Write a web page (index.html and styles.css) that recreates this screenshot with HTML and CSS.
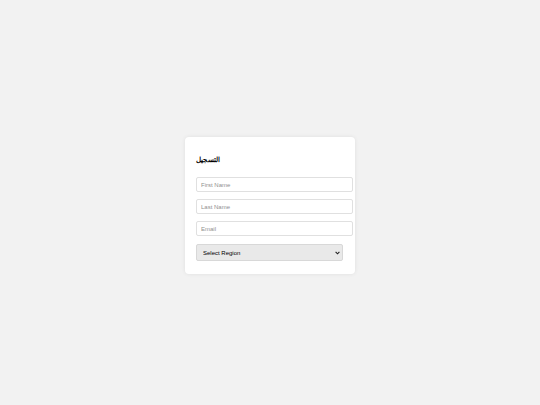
FILE: index.html
```html
<!DOCTYPE html>
<html lang="ar">
<head>
<meta charset="utf-8">
<title>التسجيل</title>
<link rel="stylesheet" href="styles.css">
</head>
<body>
<main class="page">
  <form class="card">
    <h2 class="title">التسجيل</h2>
    <input class="field" type="text" placeholder="First Name">
    <input class="field" type="text" placeholder="Last Name">
    <input class="field" type="email" placeholder="Email">
    <select class="region">
      <option>Select Region</option>
    </select>
  </form>
</main>
</body>
</html>
```
FILE: styles.css
```css
html, body {
  margin: 0;
  padding: 0;
  background: #f2f2f2;
  font-family: "Liberation Sans", Arial, sans-serif;
}
.page {
  height: 405px;
  display: flex;
  align-items: center;
  justify-content: center;
}
.card {
  width: 148px;
  padding: 11px 11px 13px;
  background: #ffffff;
  border-radius: 4px;
  box-shadow: 0 0 4px rgba(0, 0, 0, 0.08);
  display: flex;
  flex-direction: column;
  gap: 7px;
  margin-top: 6px;
}
.title {
  margin: 7px 0 5px;
  font-size: 6.5px;
  line-height: 10px;
  font-weight: bold;
  color: #000;
  text-align: left;
}
.field {
  width: 147px;
  box-sizing: content-box;
  margin: 0;
  padding: 3px 4px;
  height: 7px;
  border: 1px solid #e0e0e0;
  border-radius: 2px;
  font-family: "Liberation Sans", Arial, sans-serif;
  font-size: 6px;
  background: #fff;
  outline: none;
}
.field::placeholder {
  color: #8f8f8f;
}
.region {
  -webkit-appearance: none;
  appearance: none;
  width: 147px;
  height: 17px;
  margin: 1px 0 0;
  padding: 0 6px;
  border: 1px solid #d8d8d8;
  border-radius: 2px;
  background-color: #e9e9e9;
  background-image: url("data:image/svg+xml;utf8,<svg xmlns='http://www.w3.org/2000/svg' width='5' height='4' viewBox='0 0 5 4'><path d='M0.6 0.8 L2.5 2.8 L4.4 0.8' fill='none' stroke='%23222' stroke-width='1.1'/></svg>");
  background-repeat: no-repeat;
  background-position: right 2px center;
  background-size: 5px 4px;
  font-family: "Liberation Sans", Arial, sans-serif;
  font-size: 6px;
  font-weight: normal;
  color: #000;
}
```
